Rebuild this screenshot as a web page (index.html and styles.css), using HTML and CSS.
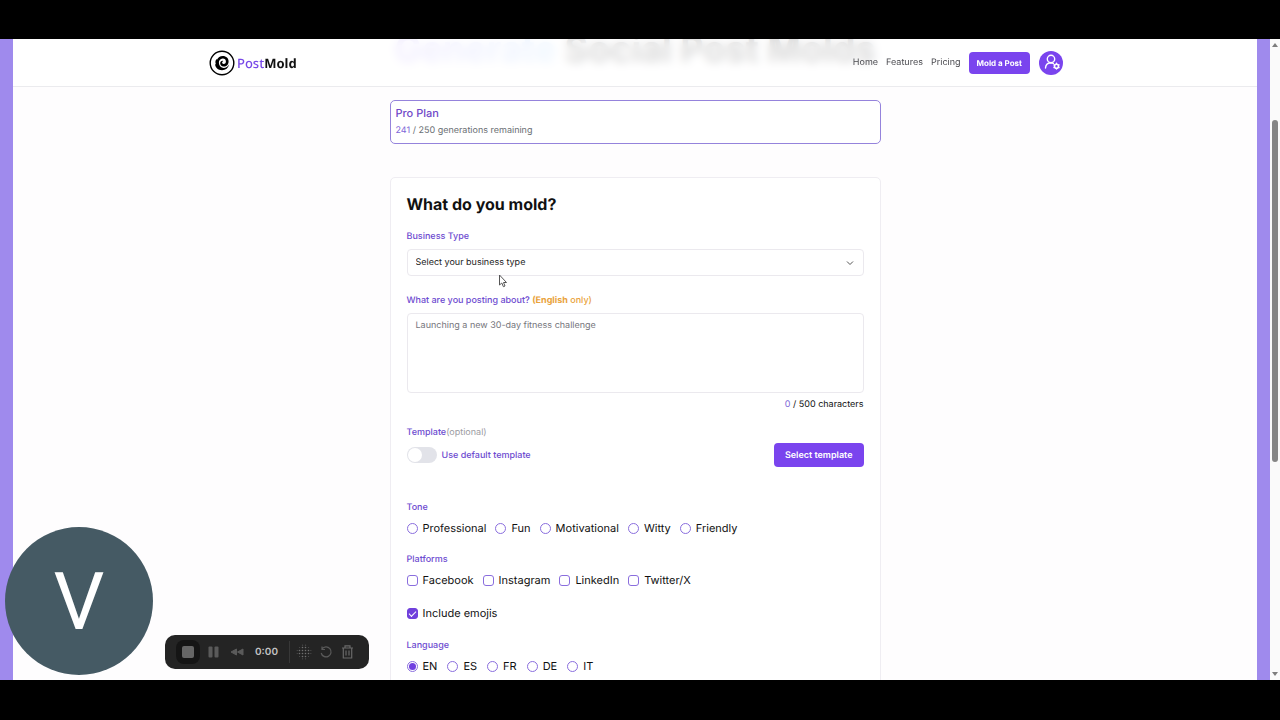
FILE: index.html
```
<!DOCTYPE html>
<html lang="en">
<head>
  <meta charset="UTF-8" />
  <meta name="viewport" content="width=device-width, initial-scale=1.0"/>
  <title>PostMold</title>
  <link rel="stylesheet" href="styles.css">
</head>
<body>
  <div class="screen">
    <div class="page">
      <header class="header">
        <div class="header-inner">
          <a class="logo" href="#">
            <svg class="logo-mark" viewBox="0 0 26 26" fill="none" stroke="#000">
              <circle cx="13" cy="13" r="11.8" stroke-width="1.4"/>
              <path fill="#000" stroke="none" d="M20 14.500C19.500 18 16.500 20.200 13 20.200C9 20.200 6.300 17.500 6 14L7 14.500C6 12.500 6.300 10.500 7.500 9L8 9.800C9 7.300 11 6 13.800 6C17.200 6 19.600 8.300 19.600 11.500C19.600 14.700 17.300 16.800 14.700 16.600C12.200 16.400 10.800 14.600 11.200 12.800C11.500 11.300 13 10.500 14.300 11C13.300 11.400 12.900 12.300 13.300 13.200C13.900 14.300 16.800 14.300 16.900 11.700C17 9.700 15.500 8.500 13.700 8.600C11.200 8.700 9.700 10.700 9.900 13.100C10.100 15.800 12 17.900 14.700 17.900C17 17.900 18.800 16.700 20 14.500Z"/>
            </svg>
            <span class="logo-text"><span class="logo-post">Post</span>Mold</span>
          </a>
          <nav class="nav">
            <a href="#">Home</a>
            <a href="#">Features</a>
            <a href="#">Pricing</a>
            <button class="btn btn-nav" type="button">Mold a Post</button>
            <button class="avatar" type="button" aria-label="Account settings">
              <svg viewBox="0 0 24 24" fill="none" stroke="#fff" stroke-width="1.400" stroke-linecap="round">
                <circle cx="12" cy="8" r="3.700"/>
                <path d="M6.500 17C6.700 13.800 8.500 12 11.500 11.800C12.800 11.800 13.700 12 14.500 12.500"/>
                <circle cx="17.500" cy="15.200" r="2" stroke-width="1.600"/>
                <path d="M17.500 12.300v.4M17.500 17.700v.4M15 13.800l.3.200M19.700 16.400l.3.200M15 16.600l.3-.2M19.700 14l.3-.2"/>
              </svg>
            </button>
          </nav>
        </div>
      </header>

      <main class="main">
        <h1 class="title"><span class="title-accent">Generate</span> Social Post Molds</h1>

        <section class="plan">
          <div class="plan-name">Pro Plan</div>
          <div class="plan-usage"><span class="count">241</span> / 250 generations remaining</div>
        </section>

        <form class="card">
          <h2>What do you mold?</h2>

          <label class="label" for="business">Business Type</label>
          <div class="select-wrap">
            <select id="business" class="field">
              <option>Select your business type</option>
            </select>
            <svg class="chevron" viewBox="0 0 10 10" fill="none" stroke="#555"><path d="M2 3.500l3 3 3-3"/></svg>
          </div>

          <label class="label" for="about">What are you posting about? <span class="note"><b>(English</b> only)</span></label>
          <textarea id="about" class="field" placeholder="Launching a new 30-day fitness challenge"></textarea>
          <div class="chars"><span class="count">0</span> / 500 characters</div>

          <div class="label">Template<span class="optional">(optional)</span></div>
          <div class="template-row">
            <label class="toggle"><input type="checkbox" class="switch">Use default template</label>
            <button class="btn" type="button">Select template</button>
          </div>

          <fieldset>
            <legend class="label">Tone</legend>
            <div class="options">
              <label><input type="radio" name="tone">Professional</label>
              <label><input type="radio" name="tone">Fun</label>
              <label><input type="radio" name="tone">Motivational</label>
              <label><input type="radio" name="tone">Witty</label>
              <label><input type="radio" name="tone">Friendly</label>
            </div>
          </fieldset>

          <fieldset>
            <legend class="label">Platforms</legend>
            <div class="options">
              <label><input type="checkbox">Facebook</label>
              <label><input type="checkbox">Instagram</label>
              <label><input type="checkbox">LinkedIn</label>
              <label><input type="checkbox">Twitter/X</label>
            </div>
          </fieldset>

          <div class="options emojis">
            <label><input type="checkbox" checked>Include emojis</label>
          </div>

          <fieldset>
            <legend class="label">Language</legend>
            <div class="options languages">
              <label><input type="radio" name="lang" checked>EN</label>
              <label><input type="radio" name="lang">ES</label>
              <label><input type="radio" name="lang">FR</label>
              <label><input type="radio" name="lang">DE</label>
              <label><input type="radio" name="lang">IT</label>
            </div>
          </fieldset>
        </form>
      </main>
    </div>

    <div class="scrollbar">
      <span class="arrow-up"></span>
      <span class="thumb"></span>
      <span class="arrow-down"></span>
    </div>

    <!-- screen recorder overlay -->
    <div class="camera">V</div>
    <div class="recorder">
      <button class="rec-stop" type="button" aria-label="Stop"><span></span></button>
      <button type="button" aria-label="Pause">
        <svg viewBox="0 0 16 16" fill="#5a5a5a"><rect x="2.500" y="2.500" width="4" height="11" rx="1"/><rect x="8.500" y="2.500" width="4" height="11" rx="1"/></svg>
      </button>
      <button type="button" aria-label="Rewind">
        <svg viewBox="0 0 16 16" fill="#5a5a5a" stroke="#5a5a5a" stroke-linejoin="round"><path d="M8.500 5v6L3 8zM15 5v6L9.500 8z"/></svg>
      </button>
      <span class="time">0:00</span>
      <span class="divider"></span>
      <button type="button" aria-label="Blur">
        <svg viewBox="0 0 16 16" stroke="#707070" stroke-width="1.600" stroke-linecap="round" stroke-dasharray="0 3"><path d="M6.500 3.500h3.100M3.500 6.500h9.100M3.500 9.500h9.100M6.500 12.500h3.100"/><path stroke="#4c4c4c" stroke-width="1.200" stroke-dasharray="none" d="M3.500 3.500h.1M12.500 3.500h.1M3.500 12.500h.1M12.500 12.500h.1M6.500 1.200h.1M9.500 1.200h.1M6.500 14.800h.1M9.500 14.800h.1M1.200 6.500h.1M1.200 9.500h.1M14.800 6.500h.1M14.800 9.500h.1"/></svg>
      </button>
      <button type="button" aria-label="Restart">
        <svg viewBox="0 0 16 16" fill="none" stroke="#5a5a5a" stroke-width="1.200"><path d="M4 5A5 5 0 1 1 3.200 9M4 2.500V5.500H7"/></svg>
      </button>
      <button type="button" aria-label="Delete">
        <svg viewBox="0 0 16 16" fill="none" stroke="#686868" stroke-width="1.200"><path d="M2 4h11M5 4V1.800h5V4M3.300 4v10h8.400V4M6 6.500v5M9 6.500v5"/></svg>
      </button>
    </div>
    <svg class="cursor" viewBox="0 0 10 14" fill="#fff" stroke="#555"><path d="M1.500 1v10l2.300-2 1.600 3.700 1.600-.7-1.500-3.500h3z"/></svg>
  </div>
</body>
</html>
```
FILE: styles.css
```
* {
  box-sizing: border-box;
}
body {
  margin: 0;
  height: 100vh;
  padding: 39px 0 40px;
  background: #000;
  font-family: Inter, "Liberation Sans", sans-serif;
  font-size: 9px;
  text-rendering: geometricPrecision;
  color: #111;
}
button, select, textarea {
  font-family: inherit;
  text-rendering: inherit;
}
a {
  color: inherit;
  text-decoration: none;
}
.screen {
  position: relative;
  display: flex;
  height: 100%;
  overflow: hidden;
  background: #fefdfe;
}
.page {
  flex: 1;
  overflow: hidden;
  border: solid #9f8aed;
  border-width: 0 13px;
}

/* header */
.header {
  position: sticky;
  top: 0;
  z-index: 1;
  padding: 0 16px 0 18px;
  background: rgba(255, 255, 255, 0.85);
  backdrop-filter: blur(5px);
  border-bottom: 1px solid #ebebee;
}
.header-inner {
  display: flex;
  align-items: center;
  justify-content: space-between;
  max-width: 854px;
  height: 47px;
  margin: 0 auto;
}
.logo {
  display: flex;
  align-items: center;
  gap: 2px;
}
.logo-mark {
  width: 26px;
  height: 26px;
}
.logo-text {
  font-family: "Noto Sans", sans-serif;
  font-size: 13px;
  font-weight: 700;
}
.logo-post {
  color: #7747e8;
  font-weight: 500;
}
.nav {
  display: flex;
  align-items: center;
  gap: 8px;
  color: #4b4b50;
}
.btn {
  height: 24px;
  padding: 0 11px;
  border: 0;
  border-radius: 4px;
  background: #7a44ee;
  color: #fff;
  font-size: 9px;
  font-weight: 600;
}
.btn-nav {
  height: 22px;
  padding: 0 8px;
  font-size: 8px;
  font-weight: 700;
}
.avatar {
  width: 24px;
  height: 24px;
  margin-left: 1px;
  padding: 0;
  border: 0;
  border-radius: 50%;
  background: #7a44ee;
}
.avatar svg {
  display: block;
}

/* content */
.main {
  max-width: 491px;
  margin: 0 auto;
}
.title {
  margin: -62px 0 27px;
  font-size: 36px;
  line-height: 48px;
  text-align: center;
  white-space: nowrap;
}
.title-accent {
  background: linear-gradient(90deg, #a98bf5, #8ec5fb);
  background-clip: text;
  color: transparent;
}
.plan {
  padding: 5px;
  border: 1px solid #9583dc;
  border-radius: 5px;
  background: #fff;
  line-height: 15px;
}
.plan-name {
  color: #7048c8;
  font-size: 11px;
  font-weight: 500;
}
.plan-usage {
  padding-top: 2px;
  color: #6b7074;
}
.count {
  color: #8068d8;
}
.card {
  margin-top: 33px;
  padding: 16px;
  border: 1px solid #efedf2;
  border-radius: 5px;
  background: #fff;
}
.card h2 {
  margin: 0 0 17px;
  font-size: 16px;
  line-height: 20px;
}
.label {
  display: block;
  padding: 0;
  color: #6d4bd0;
  font-weight: 500;
  line-height: 12px;
}
.note {
  color: #e9a23b;
}
.field {
  display: block;
  width: 100%;
  border: 1px solid #ebe9ee;
  border-radius: 4px;
  background: #fff;
  color: #222;
  font-size: 9px;
}
.select-wrap {
  position: relative;
  margin: 6px 0 19px;
}
select.field {
  height: 27px;
  padding: 0 8px;
  appearance: none;
}
.chevron {
  position: absolute;
  top: 9px;
  right: 9px;
  width: 10px;
  height: 10px;
}
textarea.field {
  height: 80px;
  margin-top: 6px;
  padding: 6px 8px;
  resize: none;
}
textarea::placeholder {
  color: #76767c;
}
.chars {
  margin: 6px 0 16px;
  line-height: 12px;
  text-align: right;
}
.optional {
  color: #9c9ca2;
  font-weight: 400;
}
.template-row {
  display: flex;
  align-items: center;
  justify-content: space-between;
  margin: 4px 0 35px;
}
.toggle {
  display: flex;
  align-items: center;
  gap: 5px;
  color: #6d4bd0;
  font-weight: 500;
}
.switch {
  display: flex;
  width: 30px;
  height: 16px;
  margin: 0;
  padding: 1px;
  border-radius: 8px;
  background: #e2e3e9;
  appearance: none;
}
.switch::before {
  content: "";
  width: 14px;
  height: 14px;
  border-radius: 50%;
  background: #fff;
}
.switch:checked {
  justify-content: flex-end;
  background: #7a44ee;
}
fieldset {
  min-width: 0;
  margin: 0 0 19px;
  padding: 0;
  border: 0;
}
.options {
  display: flex;
  gap: 9px;
  font-size: 11px;
  line-height: 14px;
}
fieldset .options {
  margin-top: 7px;
}
.languages {
  gap: 10px;
}
.options label {
  display: flex;
  align-items: center;
  gap: 5px;
}
.options input {
  display: grid;
  place-items: center;
  width: 11px;
  height: 11px;
  margin: 0;
  border: 1px solid #8a6ede;
  border-radius: 3px;
  background: #fff;
  appearance: none;
}
.options input[type="radio"] {
  border-radius: 50%;
}
.options input[type="radio"]:checked::before {
  content: "";
  width: 7px;
  height: 7px;
  border-radius: 50%;
  background: #6f3fe0;
}
.options input[type="checkbox"]:checked {
  border-color: #7040dc;
  background: #7040dc;
}
.options input[type="checkbox"]:checked::before {
  content: "";
  width: 6px;
  height: 3px;
  border: solid #fff;
  border-width: 0 0 1px 1px;
  transform: rotate(-45deg);
}
.emojis {
  margin-bottom: 20px;
}

/* scrollbar */
.scrollbar {
  display: flex;
  flex-direction: column;
  align-items: center;
  width: 10px;
  padding: 4px 0;
  background: #fafafa;
}
.arrow-up, .arrow-down {
  border: 3px solid transparent;
}
.arrow-up {
  border-top: 0;
  border-bottom: 4px solid #7d7d7d;
}
.arrow-down {
  margin-top: auto;
  border-bottom: 0;
  border-top: 4px solid #7d7d7d;
}
.thumb {
  width: 6px;
  height: 54%;
  margin-top: 73px;
  border-radius: 3px;
  background: #858585;
}

/* recorder */
.camera {
  position: absolute;
  z-index: 2;
  left: 5px;
  bottom: 5px;
  width: 148px;
  height: 148px;
  border-radius: 50%;
  background: #455a64;
  color: #fff;
  font-family: Roboto, sans-serif;
  font-size: 80px;
  line-height: 150px;
  text-align: center;
}
.recorder {
  position: absolute;
  z-index: 2;
  left: 165px;
  bottom: 11px;
  display: flex;
  align-items: center;
  gap: 6px;
  height: 34px;
  padding: 0 13px 0 11px;
  border-radius: 10px;
  background: #242424;
}
.recorder button {
  width: 16px;
  height: 16px;
  padding: 0;
  border: 0;
  background: none;
}
.recorder svg {
  display: block;
}
.recorder .rec-stop {
  display: grid;
  place-items: center;
  width: 24px;
  height: 24px;
  border-radius: 8px;
  background: #151515;
}
.rec-stop span {
  width: 12px;
  height: 12px;
  border-radius: 2px;
  background: #666;
}
.time {
  margin: 0 5px;
  color: #c4c4c4;
  font-size: 10px;
  font-weight: 600;
}
.divider {
  width: 1px;
  height: 22px;
  background: #383838;
}
.cursor {
  position: absolute;
  z-index: 2;
  left: 498px;
  top: 235px;
  width: 10px;
  height: 14px;
}
```
